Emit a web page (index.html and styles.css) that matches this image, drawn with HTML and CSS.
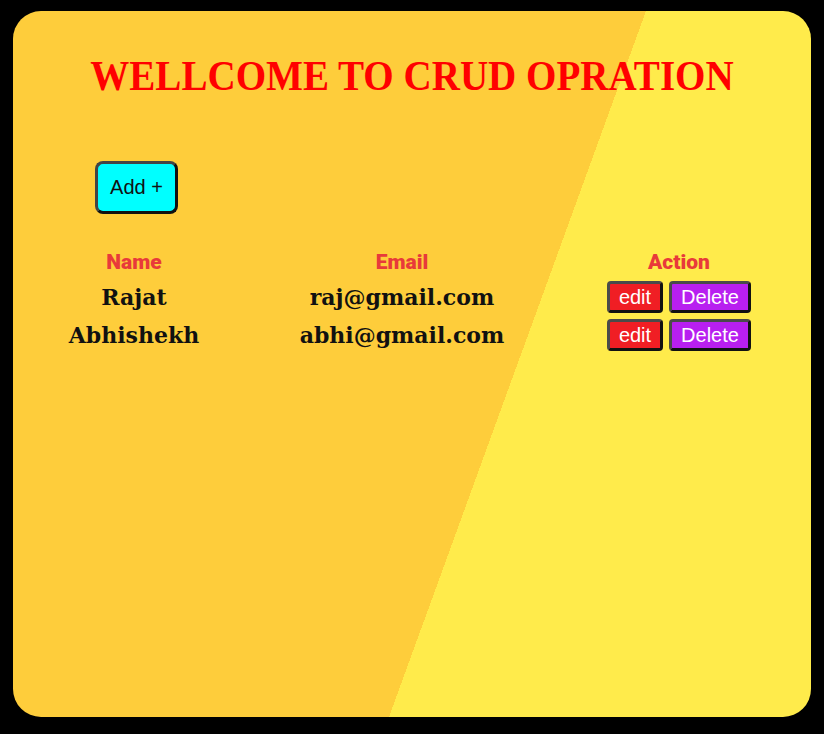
FILE: index.html
```html
<!DOCTYPE html>
<html>
<head>
<meta charset="utf-8">
<link rel="stylesheet" href="styles.css">
</head>
<body>
<div class="card">
  <h1 class="title"><span class="title-text">WELLCOME TO CRUD OPRATION</span></h1>
  <div class="toolbar"><button class="add-btn">Add +</button></div>
  <table class="users">
    <thead>
      <tr><th class="c1">Name</th><th class="c2">Email</th><th class="c3">Action</th></tr>
    </thead>
    <tbody>
      <tr><td>Rajat</td><td>raj@gmail.com</td><td><button class="btn edit">edit</button><button class="btn del">Delete</button></td></tr>
      <tr><td>Abhishekh</td><td>abhi@gmail.com</td><td><button class="btn edit">edit</button><button class="btn del">Delete</button></td></tr>
    </tbody>
  </table>
</div>
</body>
</html>
```
FILE: styles.css
```css
html, body {
  margin: 0;
  padding: 0;
  background: #000;
}
body {
  padding: 11px 13px 17px 13px;
}
.card {
  height: 706px;
  border-radius: 28px;
  background: linear-gradient(110deg, #fecd3b 60%, #ffeb4b 60%);
  overflow: hidden;
}
.title {
  margin: 0;
  padding-top: 42px;
  text-align: center;
  font-family: "Liberation Serif", serif;
  font-weight: bold;
  font-size: 42px;
  color: #ff0000;
  line-height: 46px;
}
.title-text {
  display: inline-block;
  transform: scaleX(0.93);
}
.toolbar {
  padding: 62px 0 0 82px;
}
.add-btn {
  width: 83px;
  height: 53px;
  background: #00ffff;
  border: 3px solid #444;
  border-right-color: #111;
  border-bottom-color: #111;
  border-radius: 8px;
  font-family: "Liberation Sans", Arial, sans-serif;
  font-size: 20px;
  color: #111;
  padding: 0;
}
.users {
  margin: 32px 0 0 27px;
  border-collapse: collapse;
  table-layout: fixed;
}
.c1 { width: 188px; }
.c2 { width: 348px; }
.c3 { width: 206px; }
.users th {
  font-family: Roboto, "Liberation Sans", sans-serif;
  font-weight: 900;
  font-size: 21px;
  color: #e83a3a;
  padding: 4px 0 0 0;
  height: 28px;
  text-align: center;
  vertical-align: top;
}
.users td {
  font-family: "DejaVu Serif", serif;
  font-weight: bold;
  font-size: 22px;
  color: #111;
  text-align: center;
  padding: 0;
  height: 38px;
}
.btn {
  height: 32px;
  border: 3px solid #4a4a4a;
  border-right-color: #111;
  border-bottom-color: #111;
  border-radius: 4px;
  font-family: "Liberation Sans", Arial, sans-serif;
  font-size: 20px;
  color: #fff;
  padding: 0 5px;
  margin: 0 3px;
  vertical-align: middle;
}
.edit { background: #f01e24; width: 56px; }
.del { background: #b81ff0; width: 82px; }
```
